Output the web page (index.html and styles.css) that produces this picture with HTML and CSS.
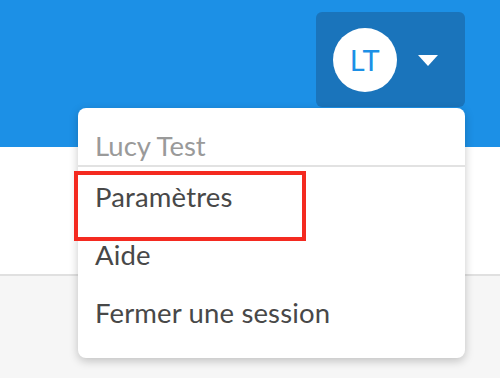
FILE: index.html
```html
<!DOCTYPE html>
<html lang="fr">
<head>
<meta charset="utf-8">
<link rel="stylesheet" href="styles.css">
</head>
<body>
<header class="topbar">
  <button class="user-btn" type="button">
    <span class="avatar">LT</span>
    <svg class="caret" width="20" height="11" viewBox="0 0 20 11"><path d="M0 0H20L10 11Z" fill="#fff"/></svg>
  </button>
  <div class="menu">
    <div class="menu-head">Lucy Test</div>
    <ul class="menu-list">
      <li class="menu-item is-marked">Paramètres</li>
      <li class="menu-item">Aide</li>
      <li class="menu-item">Fermer une session</li>
    </ul>
  </div>
</header>
<section class="content"></section>
<section class="footer-area"></section>
</body>
</html>
```

FILE: styles.css
```css
* { box-sizing: border-box; }
html, body { margin: 0; padding: 0; }
body {
  width: 500px;
  height: 378px;
  overflow: hidden;
  font-family: Lato, "Open Sans", sans-serif;
  background: #f6f6f6;
}
.topbar {
  position: relative;
  height: 147px;
  background: #1c90e6;
  display: flex;
  justify-content: flex-end;
  align-items: flex-start;
  padding: 12px 35px 0 0;
}
.user-btn {
  width: 149px;
  height: 95px;
  border: 0;
  border-radius: 6px;
  background: #1a74bb;
  display: flex;
  align-items: center;
  padding: 0 27px 0 17px;
  justify-content: space-between;
  cursor: pointer;
}
.avatar {
  width: 64px;
  height: 64px;
  border-radius: 50%;
  background: #fff;
  color: #1c90e6;
  font-family: Lato, sans-serif;
  font-size: 29px;
  display: flex;
  align-items: center;
  justify-content: center;
  letter-spacing: 0.5px;
}
.caret { display: block; margin-top: 2px; }
.menu {
  position: absolute;
  top: 108px;
  left: 78px;
  width: 387px;
  height: 250px;
  background: #fff;
  border-radius: 8px;
  box-shadow: 0 3px 10px rgba(0, 0, 0, 0.22);
  z-index: 2;
}
.menu-head {
  height: 59px;
  padding: 22px 0 0 17px;
  font-size: 27.5px;
  line-height: 32px;
  color: #9a9a9a;
  border-bottom: 2px solid #e2e2e2;
}
.menu-list {
  list-style: none;
  margin: 0;
  padding: 0;
}
.menu-item {
  position: relative;
  height: 58px;
  padding-left: 17px;
  display: flex;
  align-items: center;
  font-size: 27.5px;
  letter-spacing: 0.15px;
  color: #484848;
}
.menu-item.is-marked::after {
  content: "";
  position: absolute;
  left: -4px;
  top: 4px;
  width: 224px;
  height: 62px;
  border: 4px solid #f42a20;
}
.content {
  height: 129px;
  background: #fff;
  border-bottom: 2px solid #e0e0e0;
}
.footer-area {
  height: 102px;
  background: #f6f6f6;
}
```
